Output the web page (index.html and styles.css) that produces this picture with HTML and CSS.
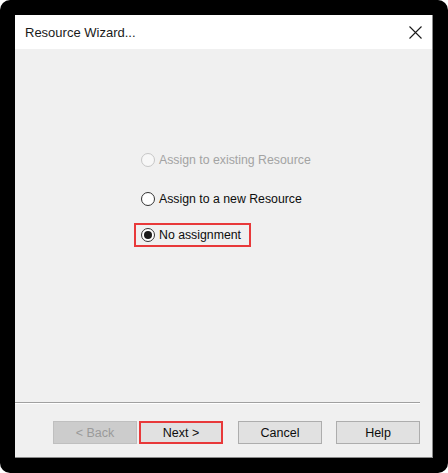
FILE: index.html
```html
<!DOCTYPE html>
<html lang="en">
<head>
<meta charset="utf-8">
<title>Resource Wizard</title>
<link rel="stylesheet" href="styles.css">
</head>
<body>
<div class="frame">
  <div class="dialog">
    <div class="titlebar">
      <span class="title">Resource Wizard...</span>
      <svg class="close" width="13" height="13" viewBox="0 0 13 13" aria-hidden="true">
        <path d="M0.5 0.5 L12.5 12.5 M12.5 0.5 L0.5 12.5" stroke="#1a1a1a" stroke-width="1.1" fill="none"/>
      </svg>
    </div>
    <div class="content">
      <div class="options">
        <label class="option option-first disabled"><span class="radio"></span><span>Assign to existing Resource</span></label>
        <label class="option"><span class="radio"></span><span>Assign to a new Resource</span></label>
        <label class="option highlighted"><span class="radio checked"></span><span>No assignment</span></label>
      </div>
    </div>
    <div class="separator"></div>
    <div class="footer">
      <button class="btn btn-disabled">&lt; Back</button>
      <button class="btn btn-next">Next &gt;</button>
      <button class="btn btn-spaced">Cancel</button>
      <button class="btn btn-spaced">Help</button>
    </div>
  </div>
</div>
</body>
</html>
```

FILE: styles.css
```css
html, body {
  margin: 0;
  padding: 0;
  background: #ffffff;
}

.frame {
  width: 448px;
  height: 473px;
  box-sizing: border-box;
  padding: 15px 15px 15px 15px;
  background: #000000;
  border-radius: 10px;
  font-family: "Liberation Sans", Arial, sans-serif;
}

.dialog {
  width: 418px;
  height: 443px;
  box-sizing: border-box;
  background: #f0f0f0;
  border-right: 1px solid #8a8a8a;
  border-bottom: 1px solid #8a8a8a;
  display: flex;
  flex-direction: column;
}

.titlebar {
  height: 34px;
  flex: 0 0 34px;
  background: #ffffff;
  display: flex;
  align-items: center;
  justify-content: space-between;
  padding: 0 10px 0 10px;
}

.title {
  font-size: 13px;
  color: #1a1a1a;
  padding-top: 1px;
}

.close {
  display: block;
}

.content {
  flex: 1;
  padding: 99px 0 0 119px;
}

.options {
  display: flex;
  flex-direction: column;
  gap: 12px;
  align-items: flex-start;
}

.option {
  display: flex;
  align-items: center;
  height: 24px;
  box-sizing: border-box;
  padding: 0 8px 0 5px;
  border: 2px solid transparent;
  font-size: 12.3px;
  color: #0d0d0d;
}

.option-first {
  margin-bottom: 3px;
}

.option.disabled {
  color: #a3a3a3;
}

.option.highlighted {
  border-color: #e8393a;
}

.radio {
  width: 14px;
  height: 14px;
  box-sizing: border-box;
  border: 1px solid #333333;
  border-radius: 50%;
  background: #ffffff;
  margin-right: 4px;
  display: flex;
  align-items: center;
  justify-content: center;
  flex: 0 0 14px;
}

.option.disabled .radio {
  border-color: #c6c6c6;
  background: #f7f7f7;
}

.radio.checked::after {
  content: "";
  width: 8px;
  height: 8px;
  border-radius: 50%;
  background: #1a1a1a;
}

.separator {
  height: 1px;
  background: #a0a0a0;
  border-bottom: 1px solid #ffffff;
  margin: 0 12px 0 0;
}

.footer {
  display: flex;
  justify-content: flex-end;
  padding: 17px 12px 13px 0;
}

.btn {
  width: 84px;
  height: 23px;
  box-sizing: border-box;
  background: #e1e1e1;
  border: 1px solid #adadad;
  font-family: "Liberation Sans", Arial, sans-serif;
  font-size: 12.5px;
  color: #0d0d0d;
  padding: 0;
  margin: 0;
}

.btn-disabled {
  background: #cccccc;
  border-color: #bfbfbf;
  color: #9a9a9a;
}

.btn-next {
  margin-left: 2px;
  border: 2px solid #e8393a;
}

.btn-spaced {
  margin-left: 15px;
}

.btn-spaced + .btn-spaced {
  margin-left: 14px;
}
```
